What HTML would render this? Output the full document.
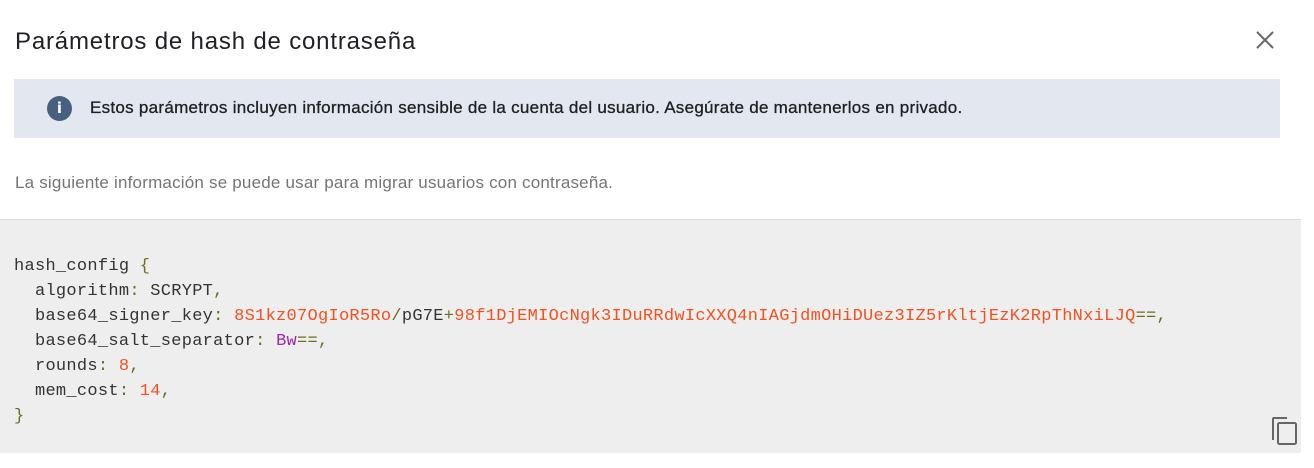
<!DOCTYPE html>
<html><head><meta charset="utf-8"><style>
html,body{margin:0;padding:0;width:1314px;height:468px;background:#fff;overflow:hidden;font-family:"Liberation Sans",Arial,sans-serif}
.title{position:absolute;left:15px;top:28px;font-size:24px;letter-spacing:0.82px;color:#202124;white-space:nowrap}
.close{position:absolute;left:1256px;top:31px}
.banner{position:absolute;left:14px;top:79px;width:1266px;height:59px;background:#e3e8f0}
.banner .ic{position:absolute;left:33px;top:17px;width:25px;height:25px;border-radius:50%;background:#47607f;color:#fff;font-weight:bold;font-size:15px;text-align:center;line-height:25px;font-family:"DejaVu Sans",sans-serif}
.banner .t{position:absolute;left:76px;top:19px;font-size:17px;letter-spacing:0.28px;color:#202124;white-space:nowrap;-webkit-text-stroke:0.3px #202124}
.info{position:absolute;left:15px;top:173px;font-size:17px;letter-spacing:0.2px;color:#757575;white-space:nowrap}
.code{position:absolute;left:0;top:219px;width:1301px;height:233px;background:#eeeeee;border-top:1px solid #dcdcdc}
pre{margin:0;position:absolute;left:14px;top:34px;font-family:"Liberation Mono",monospace;font-size:17px;letter-spacing:0.28px;line-height:25px;color:#333}
.p{color:#6d6d1c}.o{color:#f4511e}.v{color:#9c27b0}
.copy{position:absolute;left:1271px;top:416px}
</style></head><body>
<div class="title">Parámetros de hash de contraseña</div>
<svg class="close" width="18" height="18" viewBox="0 0 18 18"><path d="M1 1L17 17M17 1L1 17" stroke="#666" stroke-width="2"/></svg>
<div class="banner"><div class="ic">i</div><div class="t">Estos parámetros incluyen información sensible de la cuenta del usuario. Asegúrate de mantenerlos en privado.</div></div>
<div class="info">La siguiente información se puede usar para migrar usuarios con contraseña.</div>
<div class="code"><pre>hash_config <span class="p">{</span>
  algorithm<span class="p">:</span> SCRYPT<span class="p">,</span>
  base64_signer_key<span class="p">:</span> <span class="o">8S1kz07OgIoR5Ro</span><span class="p">/</span>pG7E<span class="p">+</span><span class="o">98f1DjEMIOcNgk3IDuRRdwIcXXQ4nIAGjdmOHiDUez3IZ5rKltjEzK2RpThNxiLJQ</span><span class="p">==,</span>
  base64_salt_separator<span class="p">:</span> <span class="v">Bw</span><span class="p">==,</span>
  rounds<span class="p">:</span> <span class="o">8</span><span class="p">,</span>
  mem_cost<span class="p">:</span> <span class="o">14</span><span class="p">,</span>
<span class="p">}</span></pre></div>
<svg class="copy" width="28" height="30" viewBox="0 0 28 30"><path d="M2 24V3Q2 2 3 2H16" fill="none" stroke="#666" stroke-width="2"/><rect x="7" y="7" width="18" height="21" rx="1.5" fill="none" stroke="#666" stroke-width="2"/></svg>
</body></html>
